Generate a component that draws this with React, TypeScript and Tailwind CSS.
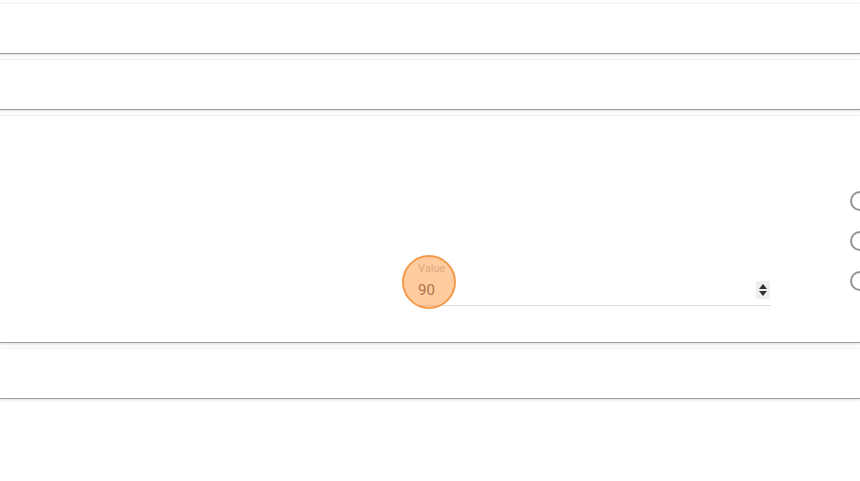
import React from "react";

/** One collapsed card row in the settings list. */
function Panel({ tall, children }: { tall?: boolean; children?: React.ReactNode }) {
  return (
    <div
      className={`relative w-full bg-white border-b border-[#9a9a9a] shadow-[0_-1px_2px_rgba(0,0,0,0.05),0_1px_3px_rgba(0,0,0,0.14)] ${
        tall ? "h-[227px]" : "h-[50px]"
      }`}
    >
      {children}
    </div>
  );
}

function Radio() {
  return <span className="block h-[20px] w-[20px] rounded-full border-2 border-[#949494] bg-white" />;
}

export default function App() {
  return (
    <div
      className="h-[481px] w-[860px] overflow-hidden bg-white pt-[4px]"
      style={{ fontFamily: "Roboto, 'Noto Sans', sans-serif" }}
    >
      <div className="flex flex-col gap-[6px]">
        <Panel />
        <Panel />
        <Panel tall>
          <div className="flex h-full items-start">
            {/* number field */}
            <div className="ml-[418px] mt-[146px] w-[353px] shrink-0">
              <div className="text-[11px] leading-[13px] text-[#b0b0b0]">Value</div>
              <div className="mt-[5px] flex items-center border-b border-[#dcdcdc] pb-[5px]">
                <span className="flex-1 text-[15px] leading-[20px] text-[#3c3c3c]">90</span>
                <span className="mr-[1px] flex h-[18px] w-[14px] flex-col items-center justify-center gap-[2px] bg-[#efefef]">
                  <svg width="8" height="5" viewBox="0 0 8 5">
                    <path d="M4 0 L8 5 L0 5 Z" fill="#333" />
                  </svg>
                  <svg width="8" height="5" viewBox="0 0 8 5">
                    <path d="M0 0 L8 0 L4 5 Z" fill="#333" />
                  </svg>
                </span>
              </div>
            </div>
            {/* radio column, clipped by the window edge */}
            <div className="ml-[79px] mt-[75px] flex shrink-0 flex-col gap-[20px]">
              <Radio />
              <Radio />
              <Radio />
            </div>
            {/* highlight marker over the field */}
            <div className="absolute left-[402px] top-[139px] h-[54px] w-[54px] rounded-full border-2 border-[#f39a4c] bg-[rgba(255,160,80,0.55)]" />
          </div>
        </Panel>
        <Panel />
      </div>
    </div>
  );
}
